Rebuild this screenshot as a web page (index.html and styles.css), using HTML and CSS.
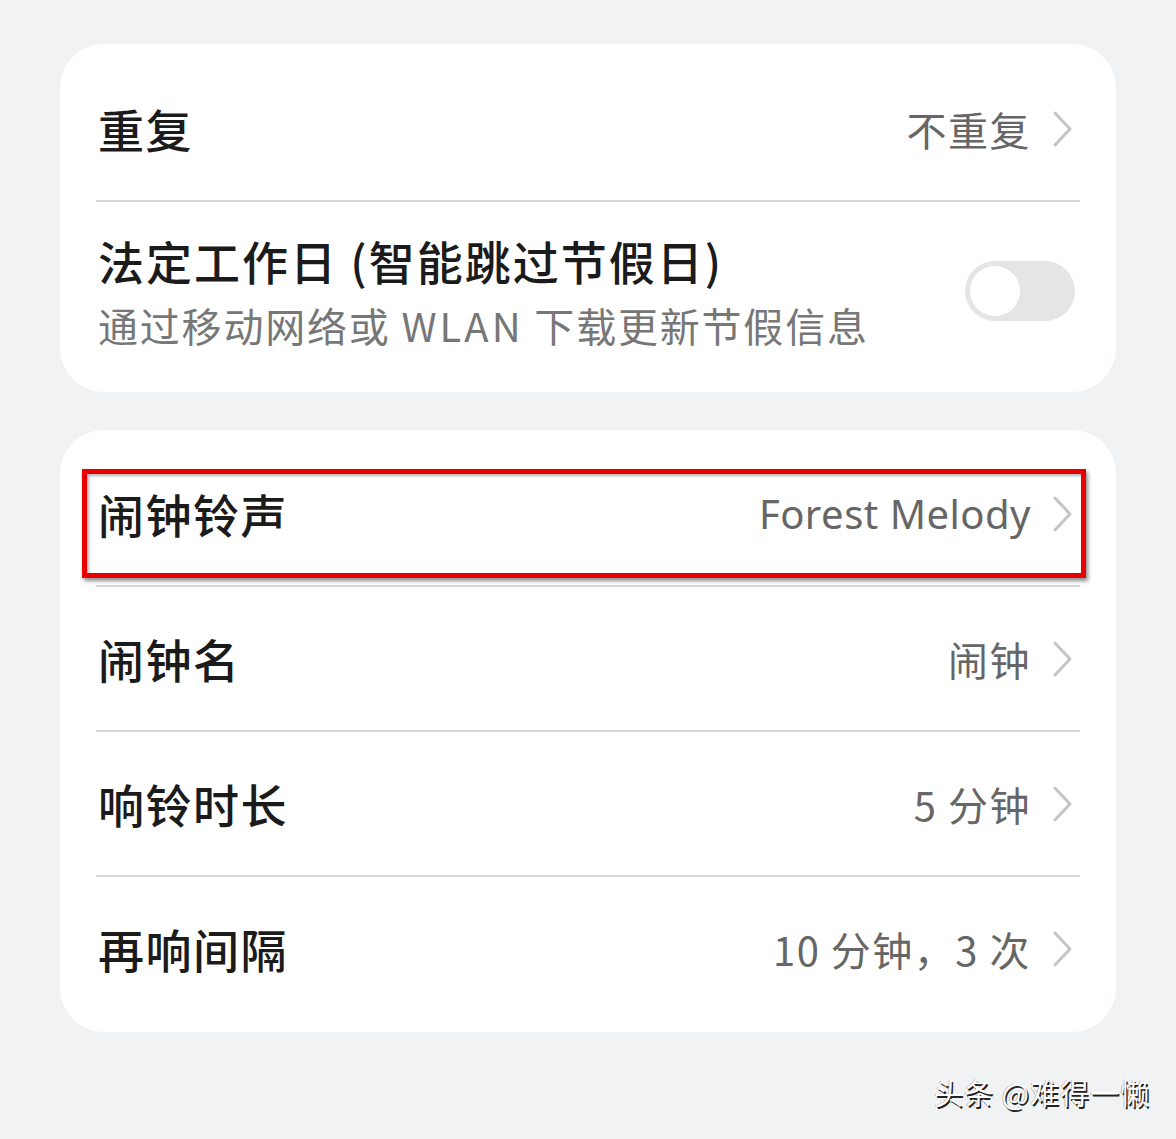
FILE: index.html
```html
<!DOCTYPE html>
<html lang="zh-CN">
<head>
<meta charset="utf-8">
<title>闹钟设置</title>
<link rel="stylesheet" href="styles.css">
</head>
<body>
<div class="page">
  <section class="card">
    <div class="row">
      <div class="label">重复</div>
      <div class="value">不重复<svg class="chev" viewBox="0 0 24 40"><path d="M4 4 L19 20 L4 36"/></svg></div>
    </div>
    <div class="divider"></div>
    <div class="row row-tall">
      <div class="texts">
        <div class="label title">法定工作日 (智能跳过节假日)</div>
        <div class="sub">通过移动网络或 <span class="wide">WLAN</span> 下载更新节假信息</div>
      </div>
      <div class="toggle"><div class="knob"></div></div>
    </div>
  </section>

  <section class="card">
    <div class="row highlight-row">
      <div class="label">闹钟铃声</div>
      <div class="value latin">Forest Melody<svg class="chev" viewBox="0 0 24 40"><path d="M4 4 L19 20 L4 36"/></svg></div>
      <div class="mark"></div>
    </div>
    <div class="divider"></div>
    <div class="row">
      <div class="label">闹钟名</div>
      <div class="value">闹钟<svg class="chev" viewBox="0 0 24 40"><path d="M4 4 L19 20 L4 36"/></svg></div>
    </div>
    <div class="divider"></div>
    <div class="row">
      <div class="label">响铃时长</div>
      <div class="value">5 分钟<svg class="chev" viewBox="0 0 24 40"><path d="M4 4 L19 20 L4 36"/></svg></div>
    </div>
    <div class="divider"></div>
    <div class="row">
      <div class="label">再响间隔</div>
      <div class="value">10 分钟，3 次<svg class="chev" viewBox="0 0 24 40"><path d="M4 4 L19 20 L4 36"/></svg></div>
    </div>
  </section>

  <div class="watermark">头条 @难得一懒</div>
</div>
</body>
</html>
```

FILE: styles.css
```css
html, body {
  margin: 0;
  padding: 0;
  background: #f1f2f4;
}
body {
  font-family: "Noto Sans CJK SC", "Noto Sans", sans-serif;
  width: 1176px;
  height: 1139px;
  overflow: hidden;
}
.page {
  padding: 44px 60px 0 60px;
  display: flex;
  flex-direction: column;
  gap: 38px;
  position: relative;
  height: 1139px;
  box-sizing: border-box;
}
.card {
  background: #fff;
  border-radius: 44px;
  padding: 12px 36px 12px 36px;
  display: flex;
  flex-direction: column;
  position: relative;
}
.card:first-child {
  padding-top: 13px;
}
.row {
  height: 143px;
  display: flex;
  align-items: center;
  justify-content: space-between;
  padding-left: 2px;
  position: relative;
}
.row-tall {
  height: 178px;
}
.divider {
  height: 2px;
  background: #d6d6d6;
}
.label {
  font-size: 46px;
  font-weight: 500;
  color: #1b1b1b;
  line-height: 1.2;
  letter-spacing: 1.5px;
}
.label.title {
  letter-spacing: 2px;
}
.texts {
  display: flex;
  flex-direction: column;
  gap: 10px;
  margin-top: 2px;
}
.sub {
  font-size: 40px;
  color: #777;
  line-height: 1.3;
  letter-spacing: 1.8px;
}
.sub .wide {
  letter-spacing: 3px;
}
.value {
  display: flex;
  align-items: center;
  font-size: 40px;
  color: #666;
  letter-spacing: 1.5px;
}
.value.latin {
  font-family: "Noto Sans", "Noto Sans CJK SC", sans-serif;
  letter-spacing: 0.5px;
}
.chev {
  width: 24px;
  height: 40px;
  margin-left: 20px;
  margin-right: 5px;
}
.chev path {
  fill: none;
  stroke: #c4c4c4;
  stroke-width: 3;
  stroke-linecap: round;
  stroke-linejoin: round;
}
.toggle {
  width: 110px;
  height: 60px;
  border-radius: 30px;
  background: #e5e5e5;
  margin-right: 5px;
  display: flex;
  align-items: center;
  padding: 0 5px;
  box-sizing: border-box;
}
.knob {
  width: 50px;
  height: 50px;
  border-radius: 50%;
  background: #fff;
}
.mark {
  position: absolute;
  left: -14px;
  top: 27px;
  width: 1004px;
  height: 109px;
  box-sizing: border-box;
  border: 5px solid #e80000;
  box-shadow: 2px 3px 4px rgba(0,0,0,0.45), inset 2px 2px 3px rgba(0,0,0,0.3);
}
.watermark {
  position: absolute;
  right: 26px;
  bottom: 26px;
  font-size: 29px;
  color: #fff;
  text-shadow: 1.5px 1.5px 0 #222, -0.5px -0.5px 0 #888;
  letter-spacing: 1px;
}
```
